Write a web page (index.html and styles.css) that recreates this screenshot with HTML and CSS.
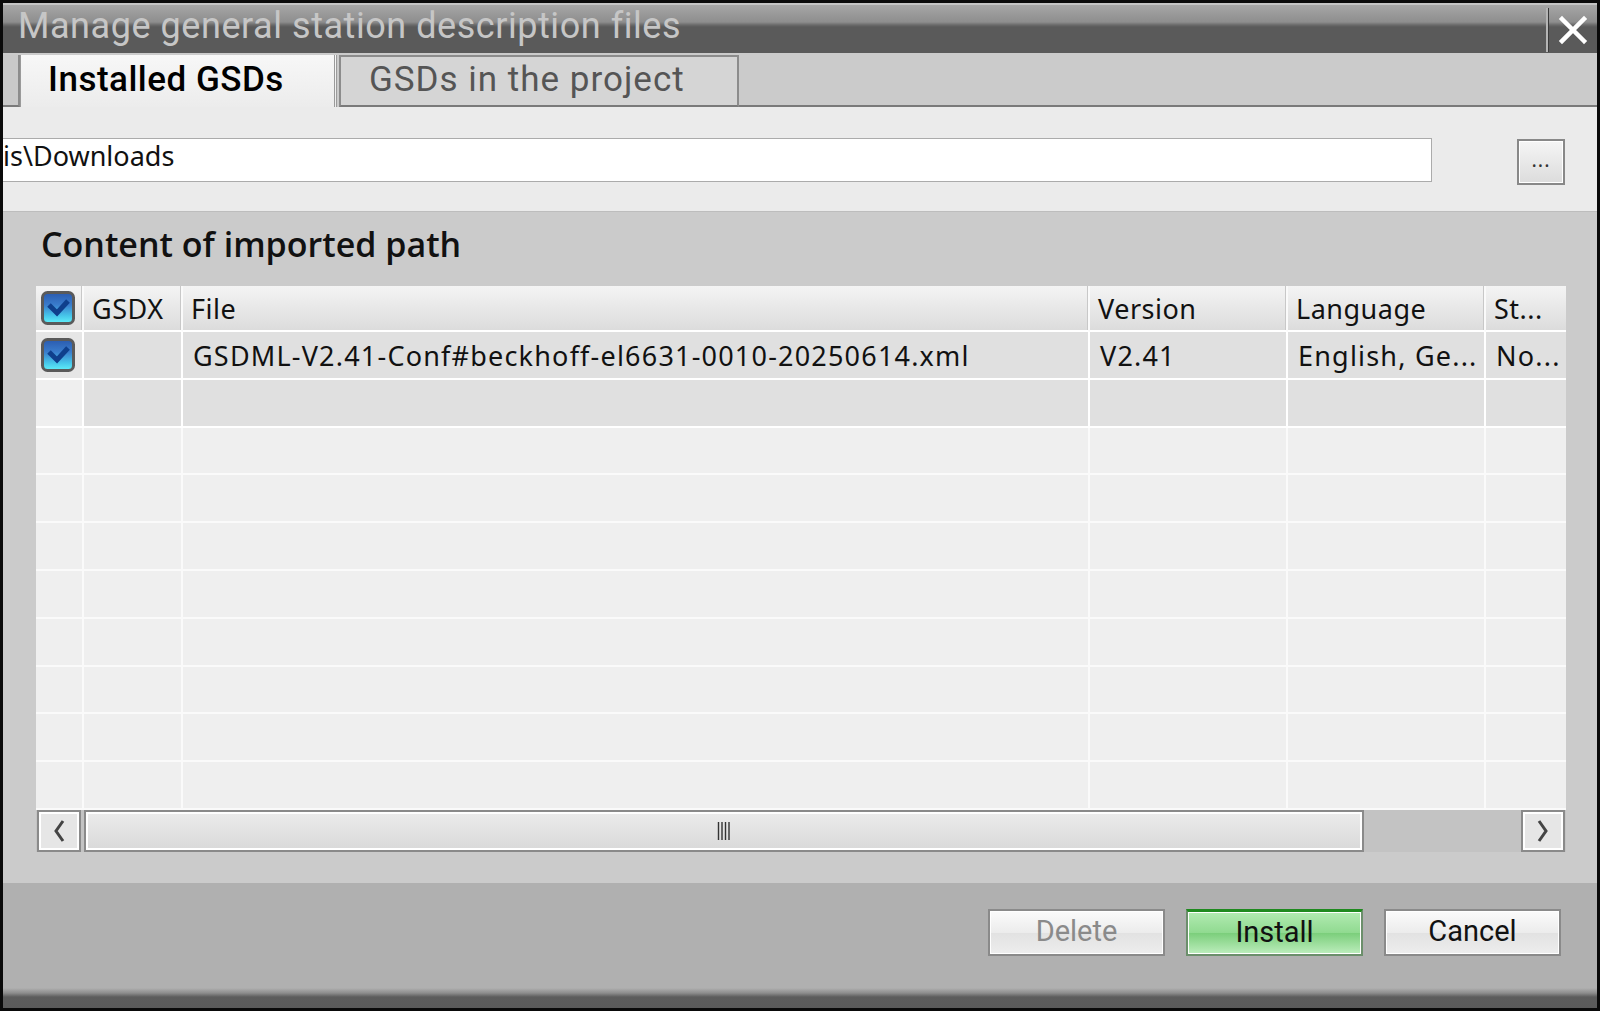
FILE: index.html
```html
<!DOCTYPE html>
<html>
<head>
<meta charset="utf-8">
<link rel="stylesheet" href="styles.css">
</head>
<body>
<div class="window">
  <div class="titlebar">
    <div class="title">Manage general station description files</div>
    <div class="close">
      <svg width="30" height="30" viewBox="0 0 30 30"><path d="M4 4 L26 26 M26 4 L4 26" stroke="#fff" stroke-width="4.5" stroke-linecap="square" fill="none"/></svg>
    </div>
  </div>
  <div class="tabstrip">
    <div class="tab-stub"></div>
    <div class="tab tab-active">Installed GSDs</div>
    <div class="tab tab-inactive">GSDs in the project</div>
    <div class="tab-fill"></div>
  </div>
  <div class="pathbar">
    <div class="pathinput">is\Downloads</div>
    <div class="browse">...</div>
  </div>
  <div class="section">
    <div class="heading">Content of imported path</div>
    <div class="grid">
      <div class="row head">
        <div class="cell c-chk"><svg class="chk" width="34" height="34" viewBox="0 0 34 34"><defs><linearGradient id="cg1" x1="0" y1="0" x2="0" y2="1"><stop offset="0" stop-color="#2a5aae"/><stop offset="0.4" stop-color="#3a7ccc"/><stop offset="0.75" stop-color="#46c6ea"/><stop offset="1" stop-color="#62f2fa"/></linearGradient></defs><rect x="1.5" y="1.5" width="31" height="31" rx="5" fill="url(#cg1)" stroke="#5a5a5a" stroke-width="3"/><path d="M8 14 L16 22 L27 10" stroke="#0f3f8c" stroke-width="5" fill="none"/></svg></div>
        <div class="cell">GSDX</div>
        <div class="cell">File</div>
        <div class="cell">Version</div>
        <div class="cell">Language</div>
        <div class="cell">St...</div>
      </div>
      <div class="row data sel">
        <div class="cell c-chk"><svg class="chk" width="34" height="34" viewBox="0 0 34 34"><rect x="1.5" y="1.5" width="31" height="31" rx="5" fill="url(#cg1)" stroke="#5a5a5a" stroke-width="3"/><path d="M8 14 L16 22 L27 10" stroke="#0f3f8c" stroke-width="5" fill="none"/></svg></div>
        <div class="cell"></div>
        <div class="cell">GSDML-V2.41-Conf#beckhoff-el6631-0010-20250614.xml</div>
        <div class="cell">V2.41</div>
        <div class="cell">English, Ge...</div>
        <div class="cell">No...</div>
      </div>
      <div class="row data sel2">
        <div class="cell c-chk"></div><div class="cell"></div><div class="cell"></div><div class="cell"></div><div class="cell"></div><div class="cell"></div>
      </div>
      <div class="row data empty"><div class="cell"></div><div class="cell"></div><div class="cell"></div><div class="cell"></div><div class="cell"></div><div class="cell"></div></div>
      <div class="row data empty"><div class="cell"></div><div class="cell"></div><div class="cell"></div><div class="cell"></div><div class="cell"></div><div class="cell"></div></div>
      <div class="row data empty"><div class="cell"></div><div class="cell"></div><div class="cell"></div><div class="cell"></div><div class="cell"></div><div class="cell"></div></div>
      <div class="row data empty"><div class="cell"></div><div class="cell"></div><div class="cell"></div><div class="cell"></div><div class="cell"></div><div class="cell"></div></div>
      <div class="row data empty"><div class="cell"></div><div class="cell"></div><div class="cell"></div><div class="cell"></div><div class="cell"></div><div class="cell"></div></div>
      <div class="row data empty"><div class="cell"></div><div class="cell"></div><div class="cell"></div><div class="cell"></div><div class="cell"></div><div class="cell"></div></div>
      <div class="row data empty"><div class="cell"></div><div class="cell"></div><div class="cell"></div><div class="cell"></div><div class="cell"></div><div class="cell"></div></div>
      <div class="row data empty last"><div class="cell"></div><div class="cell"></div><div class="cell"></div><div class="cell"></div><div class="cell"></div><div class="cell"></div></div>
      <div class="hscroll">
        <div class="sbtn"><svg width="16" height="26" viewBox="0 0 16 26"><path d="M12 3 L5 13 L12 23" stroke="#444" stroke-width="3" fill="none"/></svg></div>
        <div class="track">
          <div class="thumb">
            <svg width="14" height="18" viewBox="0 0 14 18"><path d="M1.5 0 V18 M5 0 V18 M8.5 0 V18 M12 0 V18" stroke="#333" stroke-width="1.4"/></svg>
          </div>
        </div>
        <div class="sbtn"><svg width="16" height="26" viewBox="0 0 16 26"><path d="M4 3 L11 13 L4 23" stroke="#444" stroke-width="3" fill="none"/></svg></div>
      </div>
    </div>
  </div>
  <div class="footer">
    <div class="btn btn-disabled">Delete</div>
    <div class="btn btn-green">Install</div>
    <div class="btn">Cancel</div>
  </div>
  <div class="bottombar"></div>
</div>
</body>
</html>
```

FILE: styles.css
```css
* { box-sizing: border-box; }
html, body { margin: 0; padding: 0; }
body {
  width: 1600px;
  height: 1011px;
  background: #000;
  font-family: "Noto Sans", "Open Sans", sans-serif;
  overflow: hidden;
}
.window {
  width: 1600px;
  height: 1011px;
  border: 3px solid #0a0a0a;
  display: flex;
  flex-direction: column;
  background: #cbcbcb;
}
.titlebar {
  height: 50px;
  flex: none;
  display: flex;
  align-items: stretch;
  background: linear-gradient(#a6a6a6 0, #8e8e8e 17px, #6a6a6a 20px, #5a5a5a 22px, #5a5a5a 100%);
  border-top: 2px solid #c4c4c4;
}
.title {
  flex: 1;
  font-family: Roboto, "Noto Sans", sans-serif;
  font-size: 36px;
  color: #c6c6c6;
  padding-left: 15px;
  line-height: 42px;
  letter-spacing: 0.55px;
  white-space: nowrap;
  overflow: hidden;
}
.close {
  width: 51px;
  flex: none;
  border-left: 2px solid #b5b5b5;
  box-shadow: inset 1px 0 0 #3a3a3a;
  display: flex;
  align-items: center;
  justify-content: center;
  margin-top: 3px;
  margin-bottom: 1px;
}
.tabstrip {
  height: 54px;
  flex: none;
  display: flex;
  align-items: flex-end;
  background: #cbcbcb;
}
.tab-stub {
  width: 17px;
  height: 52px;
  flex: none;
  background: #c9c9c9;
  border-right: 2px solid #8c8c8c;
  border-bottom: 2px solid #7a7a7a;
}
.tab {
  height: 52px;
  flex: none;
  font-family: Roboto, "Noto Sans", sans-serif;
  font-size: 35px;
  line-height: 50px;
  padding-left: 27px;
  white-space: nowrap;
}
.tab-active {
  width: 317px;
  background: linear-gradient(#f7f7f7, #ececec);
  border-left: 1px solid #9a9a9a;
  border-right: 3px double #9a9a9a;
  color: #000;
  font-weight: 500;
  letter-spacing: 0.5px;
}
.tab-inactive {
  width: 400px;
  background: #d5d5d5;
  border: 2px solid #8c8c8c;
  border-bottom: 2px solid #7a7a7a;
  color: #555;
  margin-left: 2px;
  padding-left: 28px;
  line-height: 46px;
  letter-spacing: 1px;
}
.tab-fill {
  flex: 1;
  height: 2px;
  background: #7a7a7a;
}
.pathbar {
  height: 105px;
  flex: none;
  background: #ebebeb;
  border-bottom: 1px solid #bdbdbd;
  display: flex;
  align-items: flex-start;
  padding-top: 31px;
}
.pathinput {
  width: 1429px;
  height: 44px;
  background: #fff;
  border: 1px solid #ababab;
  border-left: none;
  font-size: 27px;
  line-height: 34px;
  padding-left: 0;
  color: #111;
}
.browse {
  margin-left: 85px;
  margin-top: 1px;
  width: 48px;
  height: 46px;
  border: 2px solid #888;
  box-shadow: inset 0 0 0 1px #fff;
  background: linear-gradient(#f5f5f5, #dcdcdc);
  font-size: 20px;
  text-align: center;
  line-height: 38px;
  color: #333;
  letter-spacing: 1px;
}
.section {
  height: 671px;
  flex: none;
  background: #cbcbcb;
  padding-left: 33px;
  padding-top: 8px;
}
.heading {
  font-family: "Open Sans", sans-serif;
  font-weight: 600;
  font-size: 34px;
  color: #111;
  height: 66px;
  line-height: 48px;
  padding-left: 5px;
}
.grid {
  width: 1530px;
}
.row {
  display: grid;
  grid-template-columns: 48px 99px 907px 198px 198px 80px;
}
.head {
  height: 46px;
}
.head .cell {
  background: linear-gradient(#f4f4f4 0, #e8e8e8 50%, #dcdcdc 100%);
  border-right: 2px solid #fafafa;
  border-bottom: 2px solid #fff;
  box-shadow: inset -1px 0 0 #c8c8c8;
  font-size: 27px;
  line-height: 46px;
  padding-left: 8px;
  color: #111;
  letter-spacing: 0.5px;
}
.head .cell:last-child { border-right: none; box-shadow: none; }
.cell {
  white-space: nowrap;
  overflow: hidden;
}
.c-chk {
  display: flex;
  align-items: center;
  padding-left: 5px !important;
}
.data {
  height: 47.8px;
}
.data .cell {
  border-right: 2px solid #fafafa;
  border-bottom: 2px solid #fafafa;
  background: #efefef;
  font-size: 27px;
  line-height: 48px;
  padding-left: 10px;
  color: #111;
  letter-spacing: 1.2px;
}
.data .cell:last-child { border-right: none; }
.sel .cell, .sel2 .cell {
  background: #e0e0e0;
  border-color: #fff;
}
.sel2 .c-chk { background: #efefef; }
.sel .c-chk { background: #e6e6e6; }
.hscroll {
  height: 42px;
  display: flex;
  background: #c3c3c3;
}
.sbtn {
  width: 44px;
  flex: none;
  border: 2px solid #8a8a8a;
  box-shadow: inset 0 0 0 2px #fff;
  background: #e6e6e6;
  display: flex;
  align-items: center;
  justify-content: center;
}
.sbtn:first-child { margin-left: 1px; }
.sbtn:last-child { margin-right: 1px; }
.track {
  flex: 1;
  padding-left: 3px;
}
.thumb {
  width: 1280px;
  height: 42px;
  border: 2px solid #8a8a8a;
  box-shadow: inset 0 0 0 2px #fff;
  background: linear-gradient(#ececec, #d9d9d9);
  display: flex;
  align-items: center;
  justify-content: center;
}
.footer {
  height: 105px;
  flex: none;
  background: #b0b0b0;
  display: flex;
  justify-content: flex-end;
  align-items: flex-start;
  padding-top: 26px;
  padding-right: 36px;
  gap: 21px;
}
.btn {
  width: 177px;
  height: 47px;
  border: 2px solid #8a8a8a;
  box-shadow: inset 0 0 0 1px #fff;
  background: linear-gradient(#fbfbfb, #ececec 50%, #e2e2e2 51%, #ededed);
  font-family: Roboto, "Noto Sans", sans-serif;
  font-size: 29px;
  text-align: center;
  line-height: 41px;
  color: #111;
}
.btn-disabled { color: #8a8a8a; }
.btn-green {
  border-color: #6b8f6b;
  border-top: 3px solid #1f8a1f;
  background: linear-gradient(#b2ebb2, #90da90 50%, #7ccf7c 51%, #bdeebd);
}
.bottombar {
  flex: 1;
  background: linear-gradient(#b0b0b0 0, #8d8d8d 5px, #5c5c5c 9px, #5a5a5a 100%);
}
```
